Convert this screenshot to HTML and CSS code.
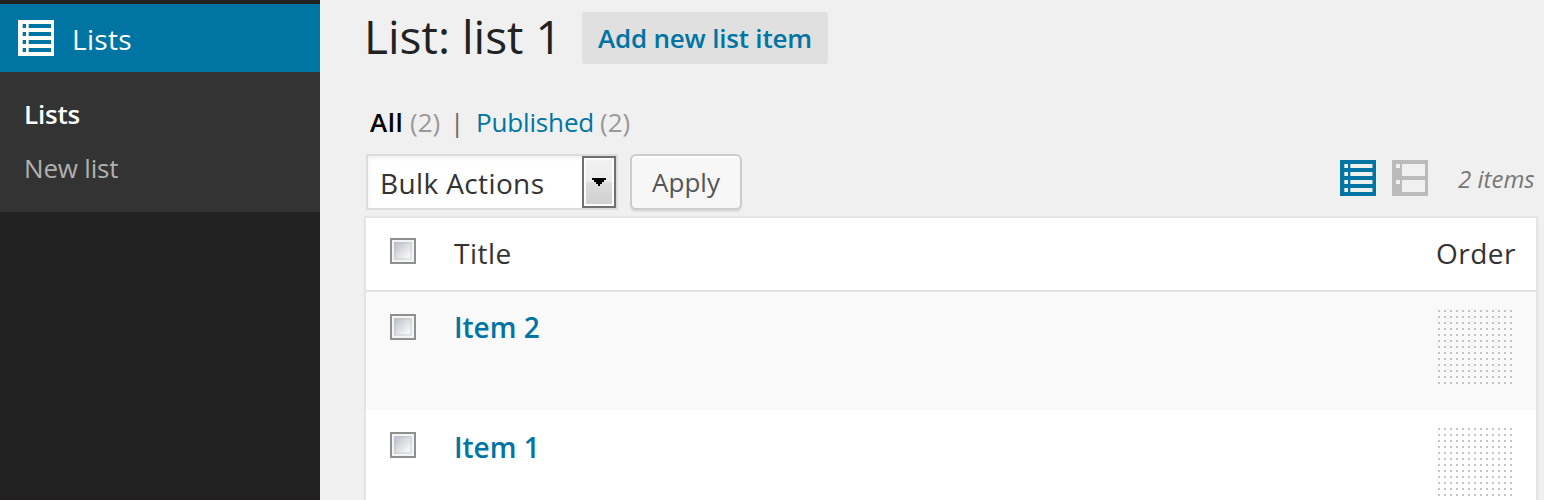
FILE: index.html
```html
<!DOCTYPE html>
<html lang="en">
<head>
<meta charset="utf-8">
<title>List: list 1</title>
<link rel="stylesheet" href="styles.css">
</head>
<body>
<div class="app">
  <nav class="sidebar">
    <a class="menu-top">
      <svg class="icon" viewBox="0 0 36 36"><path fill="currentColor" fill-rule="evenodd" d="M0 0h36v36H0zM4.700 4H8v4H4.700zM10.700 4H33v4H10.700zM4.700 12H8v4H4.700zM10.700 12H33v4H10.700zM4.700 20H8v4H4.700zM10.700 20H33v4H10.700zM4.700 28H8v4H4.700zM10.700 28H33v4H10.700z"/></svg>
      <span class="menu-name">Lists</span>
    </a>
    <div class="submenu">
      <a class="sub current">Lists</a>
      <a class="sub new">New list</a>
    </div>
  </nav>
  <main class="content">
    <header class="heading">
      <h1>List: list 1</h1>
      <a class="add-new">Add new list item</a>
    </header>
    <div class="filters">
      <b class="all">All</b><span class="count c1">(2)</span><span class="bar">|</span><a class="published">Published</a><span class="count">(2)</span>
    </div>
    <div class="tablenav">
      <div class="select"><span class="select-text">Bulk Actions</span><span class="drop"><svg width="14" height="8" viewBox="0 0 14 8" shape-rendering="crispEdges"><path d="M0 0h14v2h-2v2h-2v2H8v2H6V6H4V4H2V2H0z"/></svg></span></div>
      <button class="apply" type="button">Apply</button>
      <div class="views">
        <svg class="icon blue" viewBox="0 0 36 36"><path fill="currentColor" fill-rule="evenodd" d="M0 0h36v36H0zM4.300 4H8v4H4.300zM10.300 4H32.500v4H10.300zM4.300 12H8v4H4.300zM10.300 12H32.500v4H10.300zM4.300 20H8v4H4.300zM10.300 20H32.500v4H10.300zM4.300 28H8v4H4.300zM10.300 28H32.500v4H10.300z"/></svg>
        <svg class="icon gray" viewBox="0 0 36 36"><path fill="currentColor" fill-rule="evenodd" d="M0 0h36v36H0zM4 4h4v4H4zM10 4h23v12H10zM4 20h4v4H4zM10 20h23v12H10z"/></svg>
        <span class="total">2 items</span>
      </div>
    </div>
    <div class="table">
      <div class="row head"><span class="check"></span><span class="th">Title</span><span class="order">Order</span></div>
      <div class="row alt"><span class="check"></span><a class="item">Item 2</a><span class="handle"></span></div>
      <div class="row"><span class="check"></span><a class="item">Item 1</a><span class="handle"></span></div>
    </div>
  </main>
</div>
</body>
</html>
```
FILE: styles.css
```css
* { box-sizing: border-box; }
body { margin: 0; background: #f0f0f0; font-family: "Open Sans", sans-serif; font-size: 26px; color: #333; }
.app { display: flex; height: 500px; overflow: hidden; }
.sidebar { width: 320px; flex: none; background: #222; border-top: 4px solid #222; border-bottom: 2px solid #231f21; }
.icon { width: 36px; height: 36px; display: block; flex: none; }
.menu-top { display: flex; height: 68px; background: #0074a2; color: #fff; padding: 16px 0 0 18px; }
.menu-name { font-size: 28px; line-height: 38px; margin-left: 18px; letter-spacing: .3px; }
.submenu { background: #333; height: 140px; padding: 15px 0 0 24px; }
.sub { display: block; line-height: 54px; height: 54px; color: #b0b0b0; }
.current { color: #fff; font-weight: 600; letter-spacing: -.2px; }
.new { letter-spacing: -.2px; }
.content { flex: 1; min-width: 0; padding: 12px 6px 0 44px; white-space: nowrap; }
.heading { display: flex; height: 52px; }
h1 { margin: 0; width: 218px; font-size: 46px; font-weight: 400; line-height: 48px; color: #222; }
.add-new { width: 246px; height: 52px; border-radius: 3px; background: #e0e0e0; color: #0074a2; font-weight: 600; line-height: 52px; padding-left: 16px; letter-spacing: -.2px; }
.filters { display: flex; margin-top: 32px; height: 58px; line-height: 52px; padding-left: 6px; }
.all { color: #000; font-weight: 600; width: 40px; letter-spacing: .5px; }
.count { color: #999; }
.c1 { width: 40px; }
.bar { color: #666; width: 26px; }
.published { color: #0074a2; width: 124px; letter-spacing: -.15px; }
.tablenav { display: flex; height: 62px; padding-left: 2px; }
.select { display: flex; justify-content: space-between; width: 252px; height: 56px; border: 2px solid #ddd; padding: 0 0 0 12px; background: #fff; box-shadow: inset 0 2px 4px rgba(0,0,0,.07); font-size: 28px; line-height: 54px; letter-spacing: .38px; }
.drop { width: 34px; height: 52px; border: 2px solid #707070; background: linear-gradient(#f2f2f2 0, #ebebeb 50%, #ddd 50%, #cfcfcf 100%); box-shadow: inset 0 0 0 2px #fcfcfc; display: flex; align-items: center; justify-content: center; }
.apply { margin: 0 0 0 12px; width: 112px; height: 56px; border: 2px solid #ccc; border-radius: 6px; background: #f7f7f7; box-shadow: inset 0 2px 0 #fff, 0 2px 0 rgba(0,0,0,.08); font: 26px/52px "Open Sans", sans-serif; color: #555; padding: 0; }
.views { display: flex; margin-left: auto; padding-top: 6px; width: 198px; }
.blue { color: #0074a2; }
.gray { color: #bbb; margin-left: 16px; }
.total { margin-left: 30px; font-size: 24px; font-style: italic; color: #777; line-height: 38px; }
.table { width: 1174px; height: 300px; background: #fff; border: 2px solid #e5e5e5; box-shadow: 0 2px 2px rgba(0,0,0,.04); font-size: 28px; }
.row { display: grid; grid-template-columns: 64px 1fr 100px; height: 118px; padding-left: 24px; }
.head { height: 74px; border-bottom: 2px solid #e1e1e1; line-height: 70px; letter-spacing: .5px; }
.alt { background: #f9f9f9; }
.check { width: 26px; height: 26px; margin-top: 22px; border: 2px solid #8e8f8f; background: linear-gradient(135deg, #b8bdc6, #f6f6f6 80%) content-box, #f4f4f4; padding: 2px; box-shadow: inset 0 0 0 2px #f4f4f4, inset 0 0 0 4px rgba(185,190,198,.35); }
.head .check { margin-top: 20px; }
.item { color: #0074a2; font-weight: 600; line-height: 70px; }
.row:last-child .item { line-height: 74px; }
.handle { width: 76px; height: 76px; margin: 18px 0 0 2px; background: conic-gradient(from 0deg at 2px 2px, transparent 270deg, #c4c4c4 0) 0 0 / 6px 6px; }
```
